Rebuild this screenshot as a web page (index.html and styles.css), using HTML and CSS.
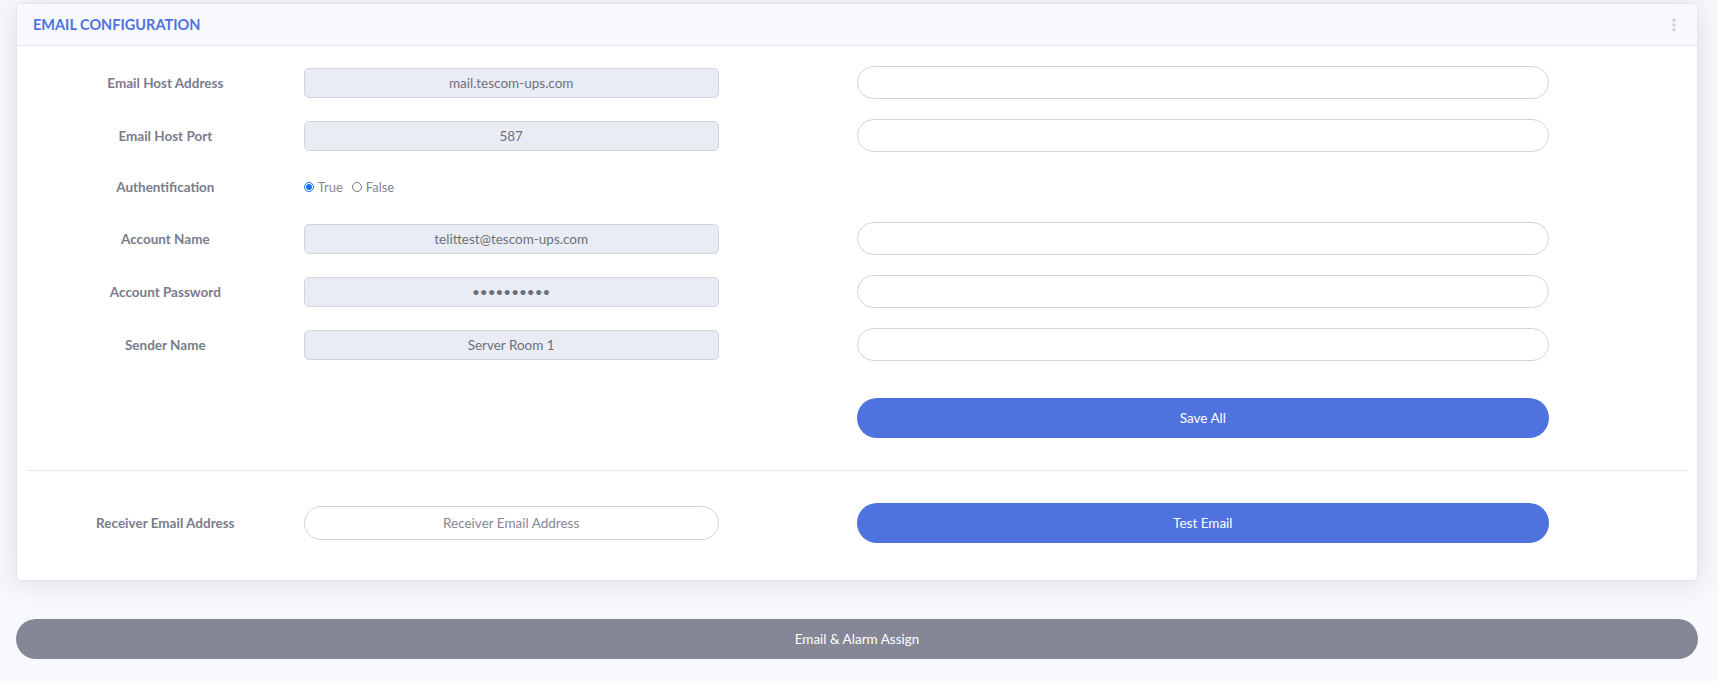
FILE: index.html
```html
<!DOCTYPE html>
<html>
<head>
	<meta charset="utf-8">
	<meta name="viewport" content="width=device-width, initial-scale=1">
	<title>Email Configuration</title>
	<link rel="stylesheet" href="styles.css">
</head>
<body>
<div class="card">
	<div class="card-header">
		<h6 class="card-title">EMAIL CONFIGURATION</h6>
		<svg class="menu-dots" width="6" height="14" viewBox="0 0 6 14">
			<circle cx="3" cy="2.2" r="1.8"/>
			<circle cx="3" cy="7" r="1.8"/>
			<circle cx="3" cy="11.8" r="1.8"/>
		</svg>
	</div>
	<div class="card-body">
		<form class="config">
			<div class="field-row">
				<label class="field-label">Email Host Address</label>
				<input class="locked" type="text" value="mail.tescom-ups.com" disabled>
				<input class="pill side" type="text">
			</div>
			<div class="field-row">
				<label class="field-label">Email Host Port</label>
				<input class="locked" type="text" value="587" disabled>
				<input class="pill side" type="text">
			</div>
			<div class="field-row auth">
				<label class="field-label">Authentification</label>
				<div class="radios">
					<input type="radio" name="auth" id="authTrue" checked>
					<label for="authTrue">True</label>
					<input type="radio" name="auth" id="authFalse">
					<label for="authFalse">False</label>
				</div>
			</div>
			<div class="field-row">
				<label class="field-label">Account Name</label>
				<input class="locked" type="text" value="telittest@tescom-ups.com" disabled>
				<input class="pill side" type="text">
			</div>
			<div class="field-row">
				<label class="field-label">Account Password</label>
				<input class="locked" type="password" value="1234567890" disabled>
				<input class="pill side" type="text">
			</div>
			<div class="field-row">
				<label class="field-label">Sender Name</label>
				<input class="locked" type="text" value="Server Room 1" disabled>
				<input class="pill side" type="text">
			</div>
			<div class="field-row action-row">
				<button type="button" class="btn btn-primary side">Save All</button>
			</div>
		</form>
		<hr class="divider">
		<div class="field-row receiver">
			<label class="field-label">Receiver Email Address</label>
			<input class="pill" type="email" placeholder="Receiver Email Address">
			<button type="button" class="btn btn-primary side">Test Email</button>
		</div>
	</div>
</div>
<button type="button" class="btn btn-secondary">Email &amp; Alarm Assign</button>
</body>
</html>
```

FILE: styles.css
```css
body {
	margin: 0;
	padding: 3px 20px 0 16px;
	background: #f8f9fc;
	font-family: Lato, "Open Sans", sans-serif;
	color: #858796;
}

.card {
	background: #fff;
	border: 1px solid #e3e6f0;
	border-radius: 5px;
	box-shadow: 0 2px 28px 0 rgba(58, 59, 69, .15);
	overflow: hidden;
}

.card-header {
	display: flex;
	align-items: center;
	justify-content: space-between;
	padding: 11px 20px 11px 16px;
	background: #f8f9fc;
	border-bottom: 1px solid #e3e6f0;
}

.card-title {
	margin: 0;
	font-size: 14.5px;
	line-height: 19px;
	font-weight: 700;
	color: #4e73df;
}

.menu-dots {
	fill: #cfd1e0;
}

.card-body {
	padding: 10px 10px 37px;
}

/* 12 column grid: label 2, field 3, gap 1, side field 5 */
.field-row {
	display: grid;
	grid-template-columns: repeat(12, 1fr);
	align-items: center;
	height: 53px;
}

.field-row.auth {
	height: 50px;
}

.field-label {
	grid-column: 1 / span 2;
	text-align: center;
	font-size: 13.5px;
	font-weight: 700;
	color: #7a7c8c;
}

.field-row input[type=text],
.field-row input[type=password],
.field-row input[type=email],
.radios {
	grid-column: 3 / span 3;
}

.side {
	grid-column: 7 / span 5 !important;
}

input {
	box-sizing: border-box;
	width: 100%;
	font-family: inherit;
	font-size: 13.5px;
	color: #6e707e;
	text-align: center;
	outline: none;
}

.locked {
	height: 30px;
	background: #eaecf4;
	border: 1px solid #d1d3e2;
	border-radius: 5px;
}

.pill {
	height: 33px;
	background: #fff;
	border: 1px solid #d1d3e2;
	border-radius: 20px;
}

.pill::placeholder {
	color: #858796;
}

.radios {
	display: flex;
	align-items: center;
	font-size: 13px;
	color: #858796;
}

.radios input {
	width: 10px;
	height: 10px;
	margin: 0 4px 0 0;
	accent-color: #1a73e8;
}

.radios label {
	margin-right: 9px;
}

.action-row {
	height: 40px;
	padding-top: 27px;
}

.btn {
	height: 40px;
	border: 0;
	border-radius: 20px;
	font-family: inherit;
	font-size: 13.5px;
	color: #fff;
	cursor: pointer;
}

.btn-primary {
	background: #4e73df;
}

.btn-secondary {
	display: block;
	width: 100%;
	margin-top: 38px;
	background: #858796;
}

.divider {
	margin: 32px 0 0;
	height: 1px;
	border: 0;
	background: #e3e6f0;
}

.receiver {
	height: 40px;
	margin-top: 32px;
}

.receiver .pill {
	height: 34px;
}
```
